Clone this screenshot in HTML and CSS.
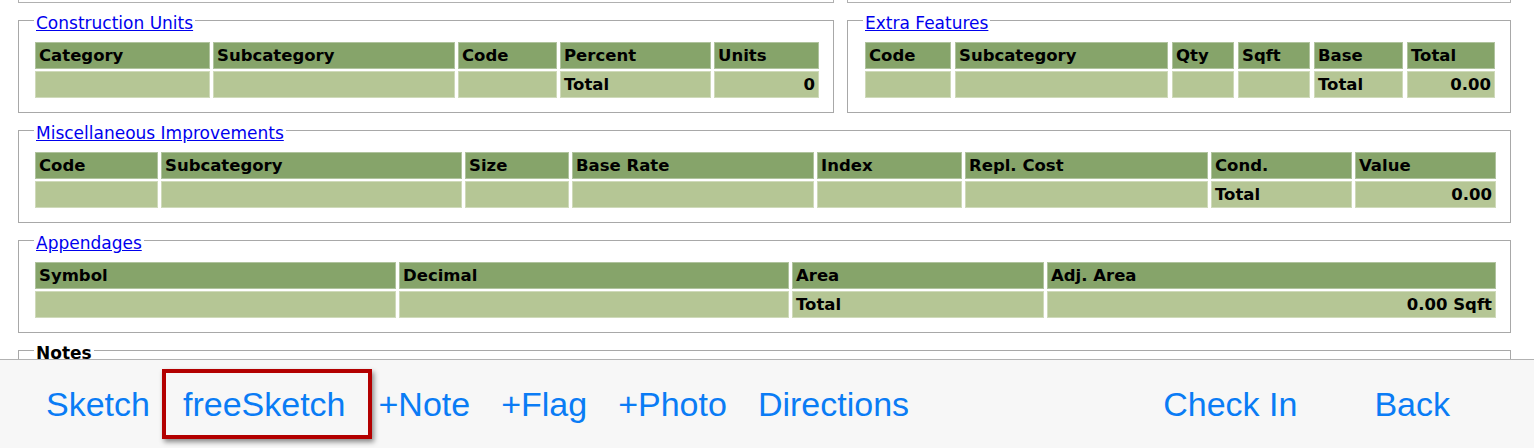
FILE: index.html
```html
<!DOCTYPE html>
<html lang="en">

<head>
    <meta charset="UTF-8">
    <meta name="viewport" content="width=device-width, initial-scale=1.0">
    <title>Property Card</title>
    <link rel="stylesheet" href="styles.css">
</head>

<body>
    <div class="content">
        <div class="row">
            <div class="prev prev-left"></div>
            <div class="prev prev-right"></div>
        </div>

        <div class="row">
            <fieldset class="box box-left">
                <legend><a href="#">Construction Units</a></legend>
                <table class="grid">
                    <tr class="head">
                        <td style="width:175px">Category</td>
                        <td style="width:242px">Subcategory</td>
                        <td style="width:99px">Code</td>
                        <td style="width:151px">Percent</td>
                        <td>Units</td>
                    </tr>
                    <tr class="data">
                        <td></td>
                        <td></td>
                        <td></td>
                        <td>Total</td>
                        <td class="num">0</td>
                    </tr>
                </table>
            </fieldset>

            <fieldset class="box box-right">
                <legend><a href="#">Extra Features</a></legend>
                <table class="grid wide-gap">
                    <tr class="head">
                        <td style="width:86px">Code</td>
                        <td style="width:213px">Subcategory</td>
                        <td style="width:62px">Qty</td>
                        <td style="width:72px">Sqft</td>
                        <td style="width:89px">Base</td>
                        <td>Total</td>
                    </tr>
                    <tr class="data">
                        <td></td>
                        <td></td>
                        <td></td>
                        <td></td>
                        <td>Total</td>
                        <td class="num">0.00</td>
                    </tr>
                </table>
            </fieldset>
        </div>

        <fieldset class="box">
            <legend><a href="#">Miscellaneous Improvements</a></legend>
            <table class="grid">
                <tr class="head">
                    <td style="width:123px">Code</td>
                    <td style="width:301px">Subcategory</td>
                    <td style="width:104px">Size</td>
                    <td style="width:242px">Base Rate</td>
                    <td style="width:145px">Index</td>
                    <td style="width:243px">Repl. Cost</td>
                    <td style="width:141px">Cond.</td>
                    <td>Value</td>
                </tr>
                <tr class="data">
                    <td></td>
                    <td></td>
                    <td></td>
                    <td></td>
                    <td></td>
                    <td></td>
                    <td>Total</td>
                    <td class="num">0.00</td>
                </tr>
            </table>
        </fieldset>

        <fieldset class="box">
            <legend><a href="#">Appendages</a></legend>
            <table class="grid">
                <tr class="head">
                    <td style="width:361px">Symbol</td>
                    <td style="width:390px">Decimal</td>
                    <td style="width:252px">Area</td>
                    <td>Adj. Area</td>
                </tr>
                <tr class="data">
                    <td></td>
                    <td></td>
                    <td>Total</td>
                    <td class="num">0.00 Sqft</td>
                </tr>
            </table>
        </fieldset>

        <fieldset class="box notes">
            <legend>Notes</legend>
            <div class="notes-body"></div>
        </fieldset>
    </div>

    <div class="toolbar">
        <a href="#" class="tool">Sketch</a>
        <a href="#" class="tool marked">freeSketch</a>
        <a href="#" class="tool">+Note</a>
        <a href="#" class="tool">+Flag</a>
        <a href="#" class="tool">+Photo</a>
        <a href="#" class="tool">Directions</a>
        <a href="#" class="tool checkin">Check In</a>
        <a href="#" class="tool back">Back</a>
    </div>
</body>

</html>
```

FILE: styles.css
```css
* {
    margin: 0;
    padding: 0;
    box-sizing: border-box;
}

body {
    height: 448px;
    overflow: hidden;
    display: flex;
    flex-direction: column;
    background-color: #fff;
    font-family: "DejaVu Sans", Verdana, sans-serif;
}

.content {
    flex: 1;
    overflow: hidden;
    padding: 0 23px 0 18px;
    display: flex;
    flex-direction: column;
    gap: 7px;
}

.row {
    display: flex;
    gap: 13px;
}

.prev {
    height: 3px;
    border: 1px solid #b0b0b0;
    border-top: none;
}

.prev-left {
    width: 816px;
}

.prev-right {
    flex: 1;
}

.box {
    border: 1px solid #a8a8a8;
    padding: 10px 11px 12px 13px;
    min-width: 0;
}

.box-left {
    width: 816px;
}

.box-right {
    flex: 1;
}

legend {
    margin-left: 2px;
    padding: 0 2px;
    height: 20px;
    line-height: 26px;
    font-size: 17px;
}

legend a {
    color: #0000ee;
    text-decoration: underline;
}

.grid {
    width: 100%;
    table-layout: fixed;
    border-spacing: 3px 2px;
    font-size: 16.5px;
    font-weight: bold;
    color: #000;
}

.wide-gap {
    border-spacing: 4px 2px;
}

.grid td {
    height: 27px;
    padding: 0 3px;
    white-space: nowrap;
    overflow: hidden;
    border: 1px solid rgba(255, 255, 255, 0.35);
}

.head td {
    background-color: #86a46a;
}

.data td {
    background-color: #b5c695;
}

.grid .num {
    text-align: right;
}

.notes legend {
    font-weight: bold;
    color: #000;
}

.notes-body {
    height: 60px;
}

.toolbar {
    height: 89px;
    flex-shrink: 0;
    display: flex;
    align-items: center;
    gap: 31px;
    padding: 0 84px 0 46px;
    border-top: 1px solid #b2b2b2;
    background-color: #f7f7f7;
    font-family: "Liberation Sans", Arial, sans-serif;
    font-size: 34px;
}

.tool {
    color: #0a7cf5;
    text-decoration: none;
    line-height: 39px;
}

.marked {
    position: relative;
    margin: 0 2px;
}

.marked::after {
    content: "";
    position: absolute;
    left: -21px;
    right: -27px;
    top: -16px;
    bottom: -15px;
    border: 4px solid #b30000;
    box-shadow: 2px 3px 5px rgba(0, 0, 0, 0.45);
}

.checkin {
    margin-left: auto;
}

.back {
    margin-left: 46px;
}
```
